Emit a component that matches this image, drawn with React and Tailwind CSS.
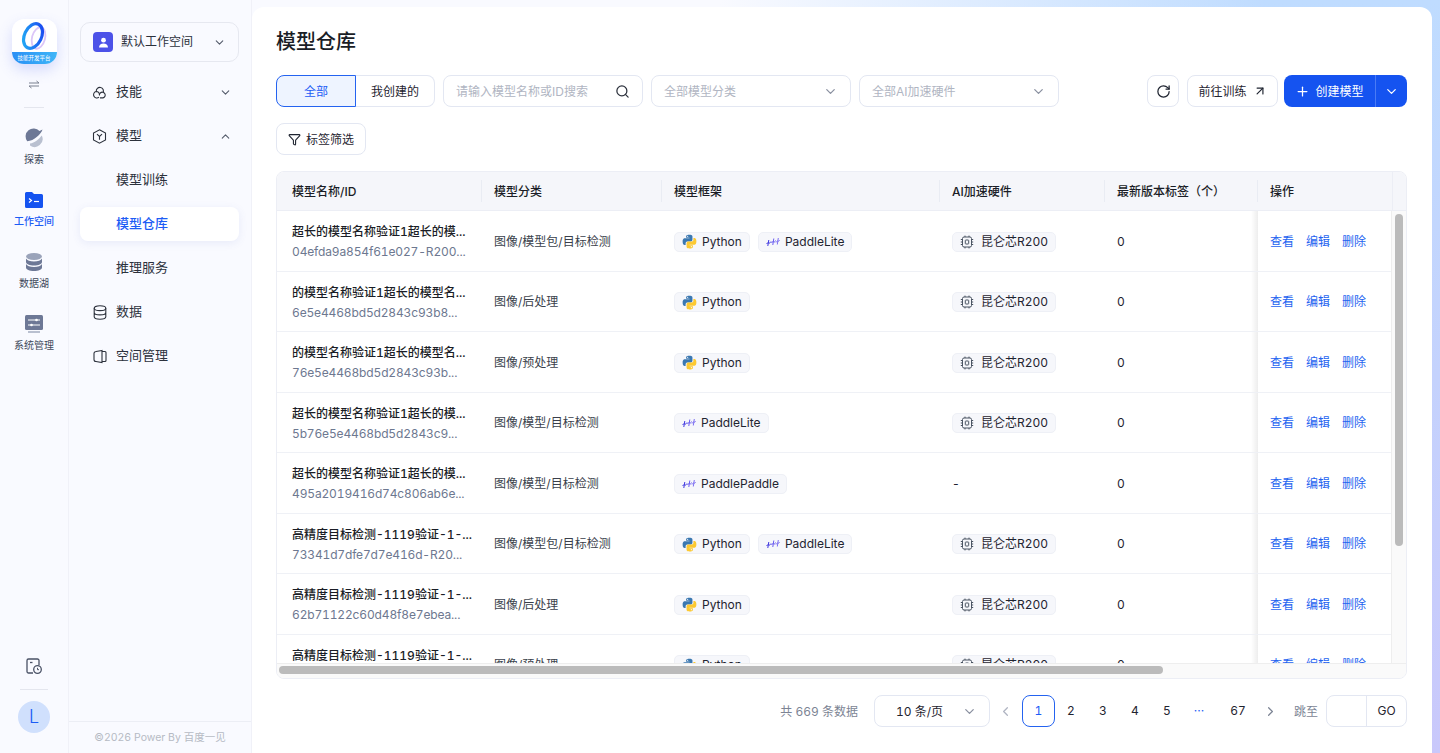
import { ChevronDown, ChevronUp, ChevronLeft, ChevronRight, Search, RotateCw, ArrowUpRight, Plus, Funnel } from "lucide-react";

const rows = [
  { name: "超长的模型名称验证1超长的模...", id: "04efda9a854f61e027-R200...", cat: "图像/模型包/目标检测", tags: ["Python", "PaddleLite"], chip: true },
  { name: "的模型名称验证1超长的模型名...", id: "6e5e4468bd5d2843c93b8...", cat: "图像/后处理", tags: ["Python"], chip: true },
  { name: "的模型名称验证1超长的模型名...", id: "76e5e4468bd5d2843c93b...", cat: "图像/预处理", tags: ["Python"], chip: true },
  { name: "超长的模型名称验证1超长的模...", id: "5b76e5e4468bd5d2843c9...", cat: "图像/模型/目标检测", tags: ["PaddleLite"], chip: true },
  { name: "超长的模型名称验证1超长的模...", id: "495a2019416d74c806ab6e...", cat: "图像/模型/目标检测", tags: ["PaddlePaddle"], chip: false },
  { name: "高精度目标检测-1119验证-1-...", id: "73341d7dfe7d7e416d-R20...", cat: "图像/模型包/目标检测", tags: ["Python", "PaddleLite"], chip: true },
  { name: "高精度目标检测-1119验证-1-...", id: "62b71122c60d48f8e7ebea...", cat: "图像/后处理", tags: ["Python"], chip: true },
  { name: "高精度目标检测-1119验证-1-...", id: "76e5e4468bd5d2843c93b...", cat: "图像/预处理", tags: ["Python"], chip: true },
];

const gridCols = "grid-cols-[205px_180px_278px_165px_153px_134px]";

function PythonIcon() {
  return (
    <svg width="15" height="15" viewBox="0 0 24 24" className="shrink-0">
      <path fill="#3b78b0" d="M11.9 1C6.3 1 6.6 3.4 6.6 3.4v2.500h5.400v.8H4.400S1 6.300 1 12s3 5.500 3 5.500h1.800v-2.600s-.1-3 2.900-3h5.200s2.800 0 2.800-2.700V3.700S17.100 1 11.900 1zM9 2.700a1 1 0 1 1 0 2 1 1 0 0 1 0-2z" />
      <path fill="#fcc931" transform="rotate(180 12 12)" d="M11.9 1C6.3 1 6.6 3.4 6.6 3.4v2.500h5.400v.8H4.400S1 6.300 1 12s3 5.500 3 5.500h1.800v-2.600s-.1-3 2.900-3h5.200s2.800 0 2.800-2.700V3.700S17.100 1 11.900 1zM9 2.700a1 1 0 1 1 0 2 1 1 0 0 1 0-2z" />
    </svg>
  );
}

function PaddleIcon() {
  return (
    <svg width="14" height="10" viewBox="0 0 14 10" fill="none" strokeWidth="1" className="shrink-0">
      <path d="M0.500 7 C1.500 5.500 2.500 5.500 3 6 S4.500 5.500 5 4.500" stroke="#3f37e0" />
      <path d="M2.800 3 L1.800 9" stroke="#3f37e0" />
      <path d="M5.500 6 C6.500 4 7.500 4.500 8 5 S9 4.500 9.500 3.500" stroke="#6a5cf0" />
      <path d="M7.800 1.500 L6.800 8" stroke="#6a5cf0" />
      <path d="M10 5.500 C11 3.500 12 4 12.300 4.300 S13 3.800 13.500 3" stroke="#7d6ff2" />
      <path d="M12.300 1 L11.300 7.500" stroke="#7d6ff2" />
    </svg>
  );
}

function ChipIcon() {
  return (
    <svg width="14" height="14" viewBox="0 0 14 14" fill="none" stroke="#4b5563" strokeWidth="1" className="shrink-0">
      <rect x="2.500" y="2" width="9" height="10" rx="1.500" />
      <rect x="5.300" y="5" width="3.400" height="4" rx="0.600" />
      <path d="M0.800 4.500h1.700M0.800 7h1.700M0.800 9.500h1.700M11.500 4.500h1.700M11.500 7h1.700M11.500 9.500h1.700M5 0.600V2M9 0.600V2M5 12v1.400M9 12v1.400" />
    </svg>
  );
}

function Tag({ children, gap }) {
  return (
    <span className={`inline-flex items-center ${gap} h-5 px-[7px] rounded-[5px] border border-[#eef0f6] bg-[#f6f7fb] text-xs text-[#1f2430]`}>
      {children}
    </span>
  );
}

function Row({ row }) {
  return (
    <div className={`grid ${gridCols} h-[60.5px] border-b border-[#eff1f6] items-stretch shrink-0`}>
      <div className="pl-[15px] pt-[2px] flex flex-col justify-center gap-[5px] text-xs">
        <div className="font-medium text-[#1a1d26] leading-[15px] whitespace-nowrap">{row.name}</div>
        <div className="text-[#6d7890] leading-[15px] whitespace-nowrap tracking-[-0.15px]">{row.id}</div>
      </div>
      <div className="pl-3 pt-[2px] flex items-center text-xs text-[#3a3f4b]">{row.cat}</div>
      <div className="pl-3 pt-[2px] flex items-center gap-2">
        {row.tags.map((t) => (
          <Tag key={t} gap="gap-[5px]">
            {t === "Python" ? <PythonIcon /> : <PaddleIcon />}
            {t}
          </Tag>
        ))}
      </div>
      <div className="pl-3 pt-[2px] flex items-center text-xs text-[#1f2430]">
        {row.chip ? (
          <Tag gap="gap-[7px]">
            <ChipIcon />
            昆仑芯R200
          </Tag>
        ) : (
          "-"
        )}
      </div>
      <div className="pl-3 pt-[2px] flex items-center text-xs text-[#1f2430]">0</div>
      <div className="-ml-[7px] pl-[19px] pt-[2px] flex items-center gap-3 text-xs text-[#2463f0] bg-[linear-gradient(to_right,transparent_0,rgba(0,0,0,0.07)_7px,#fff_7px)]">
        <span>查看</span>
        <span>编辑</span>
        <span>删除</span>
      </div>
    </div>
  );
}

function HeadCell({ children, first }) {
  return (
    <div className={`flex items-center text-xs font-medium text-[#1a1d26] ${first ? "pl-[15px]" : "pl-3"}`}>
      {!first && <span className="w-px h-[22px] bg-[#e9ecf3] -ml-[13px] mr-3" />}
      <span className="pt-[2px]">{children}</span>
    </div>
  );
}

function Logo() {
  return (
    <div className="w-[45px] h-[45px] rounded-xl bg-white flex flex-col justify-end overflow-hidden shadow-[0_6px_14px_rgba(90,110,240,0.22)]">
      <div className="flex-1 flex items-center justify-center">
        <svg width="30" height="30" viewBox="0 0 30 30" fill="none">
          <defs>
            <linearGradient id="ringA" x1="0" y1="1" x2="1" y2="0">
              <stop offset="0" stopColor="#22b4f5" />
              <stop offset="1" stopColor="#1a3ff0" />
            </linearGradient>
          </defs>
          <ellipse cx="19.500" cy="17" rx="6.500" ry="11" transform="rotate(15 19.500 17)" stroke="#dcc6f8" strokeWidth="1.800" />
          <ellipse cx="14" cy="15" rx="8.500" ry="13" transform="rotate(25 14 15)" stroke="url(#ringA)" strokeWidth="3.200" />
        </svg>
      </div>
      <div className="h-[12px] bg-gradient-to-r from-[#2b8ff5] to-[#3fb5f7] text-white text-[5.5px] leading-[12px] text-center whitespace-nowrap">
        技能开发平台
      </div>
    </div>
  );
}

function RailItem({ icon, label, active }) {
  return (
    <div className="flex flex-col items-center h-[62px] pt-[1px]">
      {icon}
      <span className={`mt-[4px] text-[10px] leading-[14px] ${active ? "text-[#1c5cf5] font-medium" : "text-[#40485a]"}`}>{label}</span>
    </div>
  );
}

function Rail() {
  return (
    <div className="w-[69px] shrink-0 h-full bg-[#f9faff] border-r border-[#f0f1f8] flex flex-col items-center pt-[19px]">
      <Logo />
      <svg width="12" height="9" viewBox="0 0 12 9" fill="none" stroke="#7b8190" strokeWidth="1" className="mt-[16px]">
        <path d="M1 3h10L8.500 1M11 6H1l2.500 2" />
      </svg>
      <div className="w-5 h-px bg-[#e4e6ee] mt-[18px] mb-[19px]" />
      <RailItem
        label="探索"
        icon={
          <svg width="20" height="20" viewBox="0 0 20 20">
            <path d="M3.200 12.800 A8 8 0 0 1 15.500 2.600 L18.500 1 C17.500 5 10 12.500 3.200 12.800 Z" fill="#6d7896" transform="translate(0 0.500)" />
            <path d="M6 15.500 C10.500 15 15 11 17.800 7.500 A8 8 0 0 1 6 17.500 Z" fill="#b9c0d0" />
          </svg>
        }
      />
      <RailItem
        active
        label="工作空间"
        icon={
          <svg width="20" height="18" viewBox="0 0 20 18" className="mt-[1px] mb-[1px]">
            <path fill="#1553f0" d="M1 2.500A1.500 1.500 0 0 1 2.500 1H8l2 2h7.500A1.500 1.500 0 0 1 19 4.500v11a1.500 1.500 0 0 1-1.500 1.500h-15A1.500 1.500 0 0 1 1 15.500z" />
            <path d="M5 7.500l2.500 2-2.500 2" stroke="#fff" strokeWidth="1.200" fill="none" />
            <path d="M10 10.500h5" stroke="#fff" strokeWidth="1.200" />
          </svg>
        }
      />
      <RailItem
        label="数据湖"
        icon={
          <svg width="20" height="20" viewBox="0 0 20 20" fill="#6d7896">
            <ellipse cx="10" cy="4.500" rx="8" ry="3.500" fill="#9aa3ba" />
            <path d="M2 6.500c1 2 4 3 8 3s7-1 8-3v3.500c0 2-3.500 3.500-8 3.500s-8-1.500-8-3.500z" />
            <path d="M2 12c1 2 4 3 8 3s7-1 8-3v3.500c0 2-3.500 3.500-8 3.500s-8-1.500-8-3.500z" />
          </svg>
        }
      />
      <RailItem
        label="系统管理"
        icon={
          <svg width="20" height="20" viewBox="0 0 20 20">
            <rect x="1" y="1" width="18" height="15" rx="1.500" fill="#6d7896" />
            <path d="M4 6h12M4 11h12" stroke="#fff" strokeWidth="1" />
            <circle cx="12.500" cy="6" r="1.300" fill="#fff" />
            <circle cx="7.500" cy="11" r="1.300" fill="#fff" />
            <rect x="4" y="17" width="12" height="2" fill="#b9c0d0" />
          </svg>
        }
      />
      <div className="mt-auto flex flex-col items-center pb-[20px]">
        <svg width="18" height="18" viewBox="0 0 18 18" fill="none" stroke="#4a5266" strokeWidth="1.300">
          <path d="M8 16H3.500A1.500 1.500 0 0 1 2 14.500v-11A1.500 1.500 0 0 1 3.500 2h9A1.500 1.500 0 0 1 14 3.500V8" />
          <path d="M5 5.500h2.500" />
          <circle cx="12.500" cy="12.500" r="3.800" />
          <path d="M12.500 10.800v1.900h1.500" strokeWidth="1" />
        </svg>
        <div className="w-7 h-px bg-[#e4e6ee] mt-[14px] mb-[11px]" />
        <div className="w-8 h-8 rounded-full bg-[#d0e0fd] text-[#1c5cf5] text-lg font-light flex items-center justify-center">L</div>
      </div>
    </div>
  );
}

function NavItem({ icon, label, open, sub, active }) {
  return (
    <div className={`h-[34px] mb-[10px] flex items-center rounded-lg shrink-0 text-[13px] ${active ? "bg-white shadow-[0_2px_8px_rgba(80,100,200,0.1)] text-[#1c5cf5] font-medium" : "text-[#2c313c]"} ${sub ? "pl-9" : "pl-3"} pr-[7px]`}>
      {icon && <span className="w-[15px] flex justify-center mr-[9px]">{icon}</span>}
      <span>{label}</span>
      {open === true && <ChevronUp size={13} className="ml-auto text-[#555c6b]" />}
      {open === false && <ChevronDown size={13} className="ml-auto text-[#555c6b]" />}
    </div>
  );
}

function SideNav() {
  return (
    <div className="w-[183px] shrink-0 h-full bg-[#f9faff] border-r border-[#f0f1f8] flex flex-col">
      <div className="flex-1 pl-[11px] pr-3 pt-[22px]">
        <div className="h-10 rounded-[10px] border border-[#e6e8f0] flex items-center pl-3 pr-[12px] mb-[13px]">
          <span className="w-5 h-5 rounded-[4px] bg-[#4c52e8] flex items-center justify-center">
            <svg width="11" height="11" viewBox="0 0 11 11" fill="#fff">
              <circle cx="5.500" cy="3.200" r="2.400" />
              <path d="M1 10.500c0-2.600 2-4 4.500-4s4.500 1.400 4.500 4z" />
            </svg>
          </span>
          <span className="ml-2 text-xs text-[#2c313c]">默认工作空间</span>
          <ChevronDown size={13} className="ml-auto text-[#555c6b]" />
        </div>
        <NavItem
          label="技能"
          open={false}
          icon={
            <svg width="15" height="15" viewBox="0 0 15 15" fill="none" stroke="#2c313c" strokeWidth="1.100">
              <path d="M4.300 6.500 A3.600 3.600 0 1 1 11 7.800" />
              <path d="M7 12.200 A3.300 3.300 0 1 1 4 6.500 C6 6.500 7.500 8 7.500 10" />
              <path d="M8 12.900 H11 A2.900 2.900 0 1 0 8.300 8 C7.500 9 7.300 10 7.500 10.500" />
            </svg>
          }
        />
        <NavItem
          label="模型"
          open={true}
          icon={
            <svg width="15" height="15" viewBox="0 0 15 15" fill="none" stroke="#2c313c" strokeWidth="1.100">
              <path d="M7.500 0.800 13.500 4v7l-6 3.200L1.500 11V4z" />
              <path d="M5 5.200l2.500 2.300L10 5.200M7.500 7.500v3.300" />
            </svg>
          }
        />
        <NavItem sub label="模型训练" />
        <NavItem sub active label="模型仓库" />
        <NavItem sub label="推理服务" />
        <NavItem
          label="数据"
          icon={
            <svg width="14" height="15" viewBox="0 0 14 15" fill="none" stroke="#2c313c" strokeWidth="1.100">
              <ellipse cx="7" cy="3.200" rx="5.800" ry="2.400" />
              <path d="M1.200 3.200v8.600c0 1.300 2.600 2.400 5.800 2.400s5.800-1.100 5.800-2.400V3.200M1.200 7.500c0 1.300 2.600 2.400 5.800 2.400s5.800-1.100 5.800-2.400" />
            </svg>
          }
        />
        <NavItem
          label="空间管理"
          icon={
            <svg width="14" height="15" viewBox="0 0 14 15" fill="none" stroke="#2c313c" strokeWidth="1.100">
              <path d="M9 1.500 3 2.500A2 2 0 0 0 1 4.500v6a2 2 0 0 0 2 2l6 1z" />
              <path d="M9 2.500h3a1 1 0 0 1 1 1v8a1 1 0 0 1-1 1H9" />
            </svg>
          }
        />
      </div>
      <div className="h-8 border-t border-[#eceef5] flex items-center justify-center text-[10.5px] text-[#b6bac4]">©2026 Power By 百度一见</div>
    </div>
  );
}

function Select({ label, width, dark }) {
  return (
    <div className={`${width} h-8 shrink-0 rounded-lg border border-[#e3e7f2] bg-white flex items-center px-3 text-xs ${dark ? "text-[#1f2430]" : "text-[#b0b5c2]"}`}>
      <span className="pt-[2px]">{label}</span>
      <ChevronDown size={15} className="ml-auto text-[#8a90a0]" />
    </div>
  );
}

function OutlineBtn({ children, className }) {
  return (
    <div className={`h-8 shrink-0 rounded-lg border border-[#e3e7f2] bg-white flex items-center justify-center text-xs text-[#1f2430] ${className}`}>
      {children}
    </div>
  );
}

function PageNum({ children, active, className }) {
  return (
    <div className={`h-8 flex items-center justify-center text-xs ${active ? "w-[33px] rounded-lg border border-[#2463f0] text-[#1c5cf5]" : "w-8 text-[#1f2430]"} ${className || ""}`}>
      {children}
    </div>
  );
}

function ModelTable() {
  return (
    <div className="h-[508px] rounded-lg border border-[#eceef5] overflow-hidden flex flex-col">
      <div className="h-[39px] shrink-0 flex bg-[#f5f6fa] border-b border-[#eceef5]">
        <div className={`grid ${gridCols}`}>
          <HeadCell first>模型名称/ID</HeadCell>
          <HeadCell>模型分类</HeadCell>
          <HeadCell>模型框架</HeadCell>
          <HeadCell>AI加速硬件</HeadCell>
          <HeadCell>最新版本标签（个）</HeadCell>
          <HeadCell>操作</HeadCell>
        </div>
        <div className="flex-1 border-l border-[#eceef5]" />
      </div>
      <div className="flex-1 min-h-0 flex">
        <div className="flex-1 min-w-0 overflow-hidden flex flex-col">
          {rows.map((r, i) => (
            <Row key={i} row={r} />
          ))}
        </div>
        <div className="w-[15px] shrink-0 bg-[#fafafa] border-l border-[#eeeeee] pt-[3px] flex justify-center">
          <div className="w-2 h-[332px] rounded-full bg-[#bbbbbb]" />
        </div>
      </div>
      <div className="h-[15px] shrink-0 bg-[#fafafa] border-t border-[#eeeeee] pl-[2px] pt-[2px]">
        <div className="w-[884px] h-2 rounded-full bg-[#bbbbbb]" />
      </div>
    </div>
  );
}

export default function App() {
  return (
    <div
      className="h-[753px] w-full overflow-hidden flex tabular-nums bg-[linear-gradient(to_right,#f9faff_50%,transparent_88%),linear-gradient(to_bottom,#bfdcff,#c9c8fb)]"
      style={{ fontFamily: 'Inter, "Noto Sans CJK SC", "Noto Sans", sans-serif' }}
    >
      <Rail />
      <SideNav />
      <div className="flex-1 min-w-0 h-[746px] mt-[7px] mr-2 bg-white rounded-t-xl pl-6 pr-[25px] pt-[17px] flex flex-col">
        <h1 className="text-xl font-medium text-[#1a1d26] leading-9">模型仓库</h1>
        <div className="mt-[15px] flex gap-2">
          <div className="flex shrink-0">
            <div className="w-20 h-8 pt-[2px] rounded-l-lg border border-[#2463f0] bg-[#eef4ff] text-[#1c5cf5] text-xs flex items-center justify-center">全部</div>
            <div className="w-[79px] h-8 pt-[2px] rounded-r-lg border border-l-0 border-[#e3e7f2] text-[#1f2430] text-xs flex items-center justify-center">我创建的</div>
          </div>
          <div className="w-[200px] h-8 shrink-0 rounded-lg border border-[#e3e7f2] flex items-center px-3 text-xs text-[#b0b5c2]">
            <span className="pt-[2px]">请输入模型名称或ID搜索</span>
            <Search size={15} className="ml-auto text-[#2c313c]" />
          </div>
          <Select label="全部模型分类" width="w-[200px]" />
          <Select label="全部AI加速硬件" width="w-[200px]" />
          <OutlineBtn className="w-8 ml-auto">
            <RotateCw size={15} />
          </OutlineBtn>
          <OutlineBtn className="w-[91px] gap-[6px]">
            <span className="pt-[2px]">前往训练</span>
            <ArrowUpRight size={14} />
          </OutlineBtn>
          <div className="w-[123px] h-8 shrink-0 rounded-lg bg-[#1553f0] text-white text-xs flex items-center -ml-[2px]">
            <div className="flex-1 flex items-center justify-center gap-[5px] border-r border-[#4a7bf5] h-full">
              <Plus size={15} />
              <span className="pt-[2px]">创建模型</span>
            </div>
            <div className="w-[31px] flex items-center justify-center">
              <ChevronDown size={15} />
            </div>
          </div>
        </div>
        <div className="mt-4">
          <OutlineBtn className="w-[90px] gap-[5px]">
            <Funnel size={13} />
            <span className="pt-[2px]">标签筛选</span>
          </OutlineBtn>
        </div>
        <div className="mt-4">
          <ModelTable />
        </div>
        <div className="mt-4 flex items-center justify-end text-xs">
          <span className="text-[#7c8494] mr-4 pt-[2px]">共 669 条数据</span>
          <Select dark label="10 条/页" width="w-[116px] pl-[21px]" />
          <ChevronLeft size={15} className="ml-[8px] mr-[9px] text-[#b0b5c2]" />
          <PageNum active>1</PageNum>
          <PageNum>2</PageNum>
          <PageNum>3</PageNum>
          <PageNum>4</PageNum>
          <PageNum>5</PageNum>
          <PageNum><span className="text-[#1c5cf5]">···</span></PageNum>
          <PageNum className="ml-[7px]">67</PageNum>
          <ChevronRight size={15} className="ml-[9px] mr-[16px] text-[#7c8494]" />
          <span className="text-[#7c8494] mr-2 pt-[2px]">跳至</span>
          <div className="w-[81px] h-8 rounded-lg border border-[#e3e7f2] flex">
            <div className="w-10 border-r border-[#e3e7f2]" />
            <div className="flex-1 flex items-center justify-center text-[#1f2430]">GO</div>
          </div>
        </div>
      </div>
    </div>
  );
}
